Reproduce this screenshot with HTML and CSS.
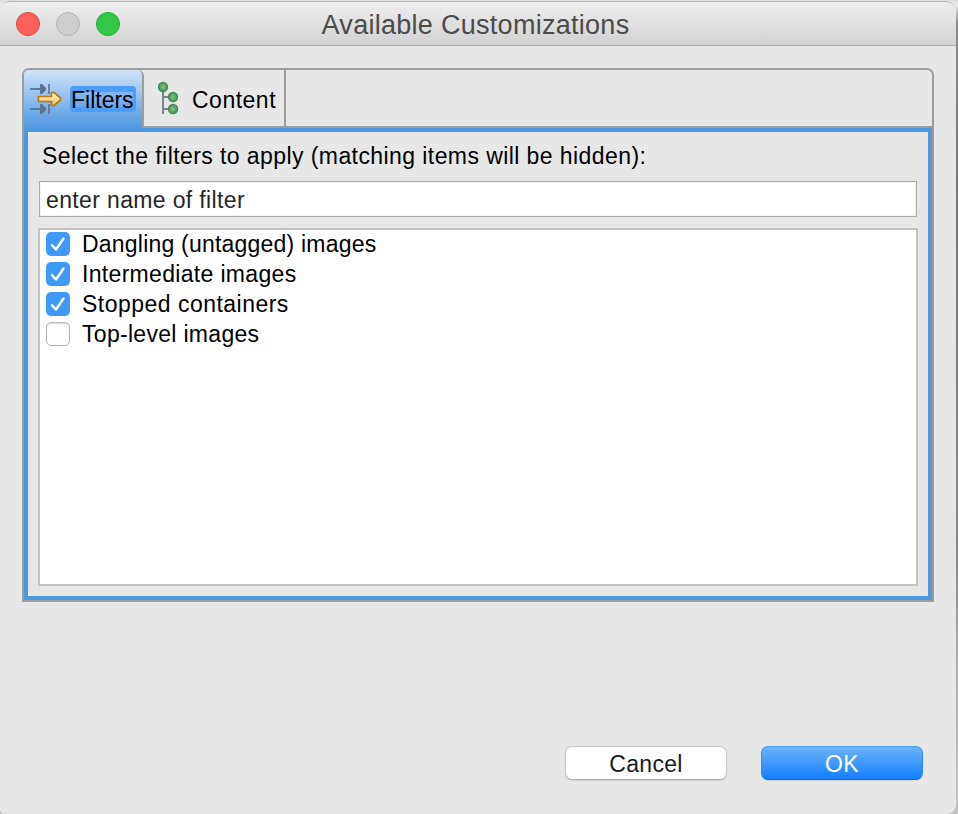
FILE: index.html
```html
<!DOCTYPE html>
<html lang="en">
<head>
<meta charset="utf-8">
<title>Available Customizations</title>
<link rel="stylesheet" href="styles.css">
</head>
<body>
<div class="window">
  <header class="titlebar">
    <div class="lights"><i class="light close"></i><i class="light minimize"></i><i class="light maximize"></i></div>
    <h1 class="title"><span>Available Customizations</span></h1>
  </header>
  <main class="folder">
    <nav class="tabs">
      <div class="tab active">
        <svg class="icon-filter" width="34" height="34" viewBox="0 0 34 34">
          <defs>
            <linearGradient id="fade" x1="0" x2="1"><stop offset="0" stop-color="#3e8cb8"/><stop offset="1" stop-color="#66697a"/></linearGradient>
            <linearGradient id="gold" x1="0" x2="0" y1="0" y2="1"><stop offset="0" stop-color="#fff6d2"/><stop offset="1" stop-color="#f3bd55"/></linearGradient>
          </defs>
          <path d="M1 6H11V2H13L17 6V8L13 12H11V8H1Z" fill="url(#fade)"/>
          <path d="M1 26H11V22H13L17 26V28L13 32H11V28H1Z" fill="url(#fade)"/>
          <path d="M20 2v10M20 22v10" stroke="#66728e" stroke-opacity=".85" stroke-width="2"/>
          <path d="M9.500 14.500H22.500V10.500H25L31.500 16V18L25 23.500H22.500V19.500H9.500Z" fill="url(#gold)" stroke="#b87816" stroke-width="1.700" stroke-linejoin="round"/>
        </svg>
        <span class="focus"><span class="t-filters">Filters</span></span>
      </div>
      <div class="tab content-tab">
        <svg class="icon-tree" width="24" height="34" viewBox="0 0 24 34">
          <defs><radialGradient id="ball"><stop offset="0" stop-color="#8bc084"/><stop offset=".6" stop-color="#58a063"/><stop offset="1" stop-color="#39804e"/></radialGradient></defs>
          <path d="M6 9v24M6 16h7M6 28h7" fill="none" stroke="#7c8296" stroke-width="2"/>
          <circle cx="6" cy="6" r="5.200" fill="url(#ball)"/><circle cx="16" cy="16" r="5.200" fill="url(#ball)"/><circle cx="16" cy="28" r="5.200" fill="url(#ball)"/>
        </svg>
        <span class="t-content">Content</span>
      </div>
    </nav>
    <section class="panel">
      <div class="prompt"><span class="t-prompt">Select the filters to apply (matching items will be hidden):</span></div>
      <div class="field"><span class="t-field">enter name of filter</span></div>
      <div class="list">
        <div class="row"><i class="box on"><svg width="24" height="24" viewBox="0 0 24 24"><path d="M6 13.200L10 17.500L17.500 6.500"/></svg></i><span class="t-dangling">Dangling (untagged) images</span></div>
        <div class="row"><i class="box on"><svg width="24" height="24" viewBox="0 0 24 24"><path d="M6 13.200L10 17.500L17.500 6.500"/></svg></i><span class="t-inter">Intermediate images</span></div>
        <div class="row"><i class="box on"><svg width="24" height="24" viewBox="0 0 24 24"><path d="M6 13.200L10 17.500L17.500 6.500"/></svg></i><span class="t-stopped">Stopped containers</span></div>
        <div class="row"><i class="box"></i><span class="t-top">Top-level images</span></div>
      </div>
    </section>
  </main>
  <footer class="buttons">
    <div class="button"><span class="t-cancel">Cancel</span></div>
    <div class="button primary"><span class="t-ok">OK</span></div>
  </footer>
</div>
</body>
</html>
```
FILE: styles.css
```css
* { box-sizing: border-box; }
body {
  margin: 0; width: 958px; height: 814px; padding: 1px 2px 0 0; overflow: hidden;
  background: linear-gradient(#dedede 0, #ececec 5px, #8a8a8a 22px, #777 200px, #8b8b8b 560px, #ababab 660px, #c4c4c4 814px);
  font: 23px/30px "Liberation Sans", Arial, sans-serif; letter-spacing: .3px; color: #000;
}
span { white-space: nowrap; }
.window { height: 813px; display: flex; flex-direction: column; background: #e7e7e7; border-radius: 9px 10px 9px 5px; overflow: hidden; }
.titlebar { position: relative; height: 45px; border-top: 1px solid #b5b5b5; border-bottom: 1px solid #adadad; border-radius: 9px 10px 0 0; background: linear-gradient(#eeeeee, #d2d2d2); flex: none; }
.lights { display: flex; gap: 16px; padding: 10px 0 0 16px; }
.light { width: 24px; height: 24px; border-radius: 50%; border: 1px solid #e2463f; background: #fc605b; }
.light.minimize { border-color: #b2b2b2; background: #cecece; }
.light.maximize { border-color: #24ab35; background: #34c84a; }
.title { position: absolute; left: 0; right: 0; top: 8px; margin: 0; padding-right: 5px; text-align: center; font-size: 27px; line-height: 30px; font-weight: 400; letter-spacing: .28px; color: #4b4b4b; }
.folder { width: 912px; height: 534px; margin: 22px 0 0 22px; border: 2px solid #9d9d9d; border-radius: 7px 7px 0 0; flex: none; }
.tabs { display: flex; height: 58px; border-bottom: 2px solid #9d9d9d; }
.tab { display: flex; align-items: center; height: 56px; border-right: 2px solid #9d9d9d; }
.active { width: 120px; height: 58px; padding-left: 5px; border-radius: 5px 6px 0 0; background: linear-gradient(#d1e3f8, #4f97e2); }
.focus { display: flex; align-items: center; height: 26px; width: 66px; margin-left: 7px; padding-left: 1px; border-radius: 4px; background: #4b9df6; }
.t-filters { height: 18px; line-height: 20px; letter-spacing: 0; background: linear-gradient(#85b8f0, #6aa8ec) 2px 2px / 60px 15px no-repeat; }
.content-tab { width: 142px; padding-left: 13px; }
.t-content { margin: 3px 0 0 11px; letter-spacing: .5px; }
.panel { height: 472px; border: 4px solid #4f97e2; padding: 9px 10px 0; }
.prompt { height: 30px; padding-left: 4px; }
.t-prompt { letter-spacing: .42px; }
.field { height: 36px; margin: 10px 1px 11px; padding: 3px 0 0 6px; border: 1px solid #aaa; background: #fff; color: #262626; box-shadow: inset 0 0 0 1px #f3f3f3; }
.t-field { letter-spacing: .36px; }
.list { height: 358px; border: 2px solid #c3c3c3; background: #fff; padding-left: 6px; }
.row { display: flex; align-items: center; height: 30px; gap: 12px; }
.box { width: 24px; height: 24px; margin-top: -2px; border: 1px solid #b4b4b4; border-radius: 5px; background: #fff; box-shadow: inset 0 1px 1px #ddd; }
.box.on { border: 0; background: #3f99f8; box-shadow: none; }
.box svg { display: block; }
.box path { fill: none; stroke: #fff; stroke-width: 2.400; stroke-linecap: round; stroke-linejoin: round; }
.row span { margin-top: -2px; }
.t-dangling { letter-spacing: .21px; }
.t-inter { letter-spacing: .32px; }
.t-stopped { letter-spacing: .48px; }
.buttons { display: flex; justify-content: flex-end; gap: 34px; margin: 144px 33px 0 0; }
.button { width: 162px; height: 34px; border-radius: 7px; border: 1px solid #c6c6c6; border-bottom-color: #b0b0b0; background: #fff; text-align: center; line-height: 34px; color: #1b1b1b; box-shadow: 0 1px 1px #d0d0d0; }
.primary { border-color: #4ba0f3 #2f8bf5 #0f67ee; background: linear-gradient(#6cb3f8, #147eff); color: #fff; }
```
